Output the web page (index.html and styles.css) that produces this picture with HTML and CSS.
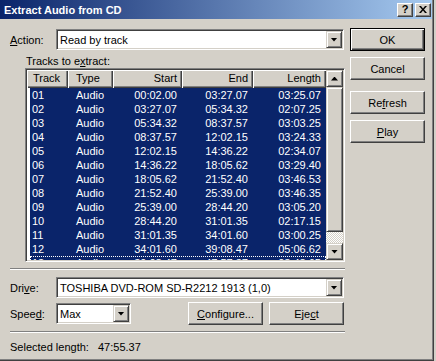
FILE: index.html
```html
<!DOCTYPE html>
<html lang="en">
<head>
  <meta charset="UTF-8" />
  <title>Extract Audio from CD</title>
  <link rel="stylesheet" href="styles.css">
</head>
<body>

<div class="window">
  <div class="titlebar">
    <div class="title">Extract Audio from CD</div>
    <div class="title-buttons">
      <button class="tbtn">?</button>
      <button class="tbtn">
        <svg width="8" height="7" viewBox="0 0 8 7"><path d="M0 0h2l2 2.4L6 0h2L5 3.5 8 7H6L4 4.6 2 7H0l3-3.5z" fill="#000"/></svg>
      </button>
    </div>
  </div>

  <div class="content">
    <div class="main">
      <div class="field-row">
        <span class="label"><u>A</u>ction:</span>
        <div class="combo">
          <span class="combo-text">Read by track</span>
          <span class="drop"><span class="arrow-down"></span></span>
        </div>
      </div>

      <div class="list-label">Tracks to e<u>x</u>tract:</div>

      <div class="listview">
        <div class="list-body">
          <div class="list-header">
            <span class="hcell left first">Track</span>
            <span class="hcell left">Type</span>
            <span class="hcell">Start</span>
            <span class="hcell">End</span>
            <span class="hcell">Length</span>
          </div>
          <div id="rows"></div>
        </div>
        <div class="scrollbar">
          <span class="sbtn"><span class="arrow-up"></span></span>
          <span class="thumb"></span>
          <span class="track"></span>
          <span class="sbtn"><span class="arrow-down"></span></span>
        </div>
      </div>

      <div class="separator"></div>

      <div class="field-row drive-row">
        <span class="label">Dri<u>v</u>e:</span>
        <div class="combo">
          <span class="combo-text">TOSHIBA DVD-ROM SD-R2212 1913 (1,0)</span>
          <span class="drop"><span class="arrow-down"></span></span>
        </div>
      </div>

      <div class="field-row speed-row">
        <span class="label">Spee<u>d</u>:</span>
        <div class="combo small">
          <span class="combo-text">Max</span>
          <span class="drop"><span class="arrow-down"></span></span>
        </div>
        <button class="btn configure"><u>C</u>onfigure...</button>
        <button class="btn">Eje<u>c</u>t</button>
      </div>

      <div class="separator"></div>

      <div class="status">
        <span class="status-label">Selected length:</span>47:55.37
      </div>
    </div>

    <div class="side">
      <button class="btn default">OK</button>
      <button class="btn">Cancel</button>
      <button class="btn gap">Re<u>f</u>resh</button>
      <button class="btn"><u>P</u>lay</button>
    </div>
  </div>
</div>

<script>
  const tracks = [
    ["01", "00:02.00", "03:27.07", "03:25.07"],
    ["02", "03:27.07", "05:34.32", "02:07.25"],
    ["03", "05:34.32", "08:37.57", "03:03.25"],
    ["04", "08:37.57", "12:02.15", "03:24.33"],
    ["05", "12:02.15", "14:36.22", "02:34.07"],
    ["06", "14:36.22", "18:05.62", "03:29.40"],
    ["07", "18:05.62", "21:52.40", "03:46.53"],
    ["08", "21:52.40", "25:39.00", "03:46.35"],
    ["09", "25:39.00", "28:44.20", "03:05.20"],
    ["10", "28:44.20", "31:01.35", "02:17.15"],
    ["11", "31:01.35", "34:01.60", "03:00.25"],
    ["12", "34:01.60", "39:08.47", "05:06.62"],
    ["13", "39:08.47", "47:57.37", "08:48.65"]
  ];

  function renderRows() {
    const container = document.getElementById("rows");
    tracks.forEach((t, i) => {
      const row = document.createElement("div");
      row.className = "row selected" + (i === tracks.length - 1 ? " focus" : "");
      row.innerHTML = `
        <span class="cell left first">${t[0]}</span>
        <span class="cell left">Audio</span>
        <span class="cell">${t[1]}</span>
        <span class="cell">${t[2]}</span>
        <span class="cell">${t[3]}</span>
      `;
      container.appendChild(row);
    });
  }

  renderRows();
</script>

</body>
</html>
```

FILE: styles.css
```css
:root {
  --face: #d4d0c8;
  --shadow: #808080;
  --dark: #404040;
  --select: #0a246a;
}

body {
  margin: 0;
  background: var(--face);
  font-family: "Liberation Sans", Arial, sans-serif;
  font-size: 11px;
  color: #000;
}

u {
  text-underline-offset: 1px;
}

.window {
  width: 434px;
  height: 361px;
  background: var(--face);
  box-shadow: inset -1px -1px var(--dark), inset -2px -2px var(--shadow);
  overflow: hidden;
}

/* title bar */

.titlebar {
  width: 432px;
  height: 19px;
  box-sizing: border-box;
  padding: 0 1px 0 4px;
  display: flex;
  align-items: center;
  justify-content: space-between;
  background: linear-gradient(to right, #0a246a, #a6caf0);
}

.title {
  color: #fff;
  font-weight: bold;
  font-size: 11px;
}

.title-buttons {
  display: flex;
  gap: 2px;
}

.tbtn {
  width: 16px;
  height: 14px;
  padding: 0;
  box-sizing: border-box;
  background: var(--face);
  border: 1px solid;
  border-color: #fff var(--dark) var(--dark) #fff;
  box-shadow: inset -1px -1px var(--shadow);
  font: bold 11px "Liberation Sans", Arial, sans-serif;
  line-height: 11px;
  display: flex;
  align-items: center;
  justify-content: center;
}

/* layout */

.content {
  display: flex;
  gap: 5px;
  padding: 9px 0 0 10px;
}

.main {
  width: 335px;
  padding-top: 1px;
}

.side {
  width: 75px;
  display: flex;
  flex-direction: column;
  gap: 6px;
}

.side .gap {
  margin-top: 5px;
}

.field-row {
  width: 334px;
  height: 21px;
  display: flex;
  align-items: center;
}

.label {
  width: 46px;
  flex-shrink: 0;
}

/* combo boxes */

.combo {
  flex: 1;
  height: 21px;
  box-sizing: border-box;
  padding: 1px;
  background: #fff;
  border: 1px solid;
  border-color: var(--shadow) #fff #fff var(--shadow);
  box-shadow: inset 1px 1px var(--dark), inset -1px -1px var(--face);
  display: flex;
  align-items: center;
  justify-content: space-between;
}

.combo.small {
  flex: none;
  width: 75px;
}

.combo-text {
  padding-left: 2px;
  white-space: nowrap;
}

.drop, .sbtn {
  width: 16px;
  height: 17px;
  box-sizing: border-box;
  background: var(--face);
  border: 1px solid;
  border-color: var(--face) var(--dark) var(--dark) var(--face);
  box-shadow: inset 1px 1px #fff, inset -1px -1px var(--shadow);
  display: flex;
  align-items: center;
  justify-content: center;
  flex-shrink: 0;
}

.arrow-down, .arrow-up {
  width: 7px;
  height: 4px;
  background: #000;
}

.arrow-down {
  clip-path: polygon(0 0, 100% 0, 50% 100%);
}

.arrow-up {
  clip-path: polygon(50% 0, 100% 100%, 0 100%);
}

/* buttons */

.btn {
  width: 75px;
  height: 23px;
  padding: 0;
  box-sizing: border-box;
  background: var(--face);
  border: 1px solid;
  border-color: #fff var(--dark) var(--dark) #fff;
  box-shadow: inset -1px -1px var(--shadow);
  font: inherit;
  color: #000;
  flex-shrink: 0;
}

.btn.default {
  border-color: #000;
  box-shadow: inset 1px 1px #fff, inset -1px -1px var(--dark), inset -2px -2px var(--shadow);
}

.configure {
  margin-left: auto;
  margin-right: 6px;
}

/* list view */

.list-label {
  margin-top: 4px;
  padding-left: 16px;
  line-height: 14px;
}

.listview {
  margin-left: 15px;
  width: 320px;
  height: 194px;
  box-sizing: border-box;
  padding: 1px;
  background: #fff;
  border: 1px solid;
  border-color: var(--shadow) #fff #fff var(--shadow);
  box-shadow: inset 1px 1px var(--dark), inset -1px -1px var(--face);
  display: flex;
}

.list-body {
  flex: 1;
  overflow: hidden;
}

.list-header {
  display: grid;
  grid-template-columns: 41px 45px 69px 71px 73px;
  height: 18px;
}

.hcell {
  background: var(--face);
  box-shadow: inset 1px 1px #fff, inset -1px -1px var(--dark), inset -2px -2px var(--shadow);
  text-align: right;
  padding-right: 5px;
  line-height: 17px;
  white-space: nowrap;
}

.hcell.left, .cell.left {
  text-align: left;
  padding-right: 0;
  padding-left: 8px;
}

.hcell.first {
  padding-left: 6px;
}

.row {
  display: grid;
  grid-template-columns: 38px 45px 69px 71px 73px;
  margin-left: 3px;
  height: 14px;
  line-height: 14px;
}

.row.selected {
  background: var(--select);
  color: #fff;
}

.row.focus {
  outline: 1px dotted #fff;
  outline-offset: -1px;
}

.cell {
  text-align: right;
  padding-right: 5px;
  white-space: nowrap;
}

.cell.first {
  padding-left: 2px;
}

.scrollbar {
  width: 17px;
  display: flex;
  flex-direction: column;
}

.scrollbar .sbtn {
  width: 17px;
}

.thumb {
  height: 145px;
  box-sizing: border-box;
  background: var(--face);
  border: 1px solid;
  border-color: var(--face) var(--dark) var(--dark) var(--face);
  box-shadow: inset 1px 1px #fff, inset -1px -1px var(--shadow);
}

.track {
  height: 11px;
  background: repeating-conic-gradient(#fff 0 25%, var(--face) 0 50%) 0 0 / 2px 2px;
}

/* separators and status */

.separator {
  margin-top: 6px;
  height: 0;
  border-top: 1px solid var(--shadow);
  border-bottom: 1px solid #fff;
}

.drive-row {
  margin-top: 7px;
}

.speed-row {
  margin-top: 4px;
  height: 23px;
}

.status {
  margin-top: 7px;
  line-height: 14px;
}

.status-label {
  display: inline-block;
  width: 88px;
}
```
